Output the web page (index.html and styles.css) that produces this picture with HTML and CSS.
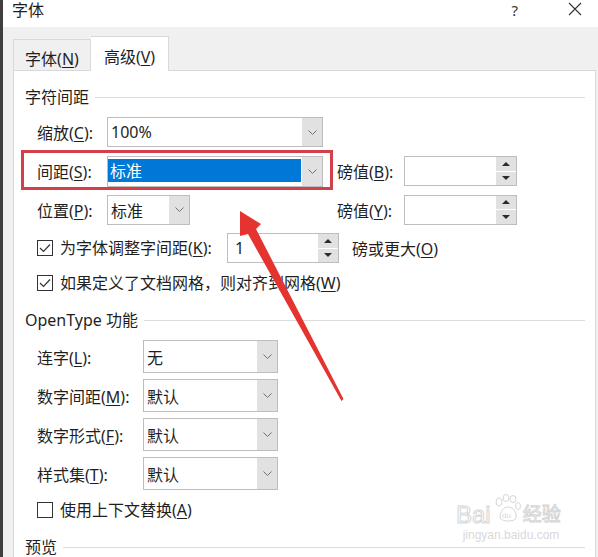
FILE: index.html
```html
<!DOCTYPE html>
<html>
<head>
  <meta charset="utf-8">
  <title>字体</title>
  <link rel="stylesheet" href="styles.css">
</head>
<body>
<div class="screen">
  <div class="edge"></div>
  <div class="dialog">
    <div class="titlebar">
      <span class="title">字体</span>
      <span class="help">?</span>
      <svg class="close" width="14" height="14" viewBox="0 0 14 14"><path d="M1 1L13 13M13 1L1 13" stroke="#333" stroke-width="1.1" fill="none"/></svg>
    </div>

    <div class="tabs">
      <div class="tab">字体(<u>N</u>)</div>
      <div class="tab active">高级(<u>V</u>)</div>
    </div>

    <div class="panel">
      <div class="group-title"><span>字符间距</span></div>
      <div class="group">
        <div class="row grid1 r-scale">
          <span class="lbl">缩放(<u>C</u>):</span>
          <div class="combo"><span class="val">100%</span><span class="drop"></span></div>
        </div>
        <div class="row grid1 r-spacing">
          <span class="lbl">间距(<u>S</u>):</span>
          <div class="combo"><span class="val selected">标准</span><span class="drop"></span></div>
          <span></span>
          <span class="lbl">磅值(<u>B</u>):</span>
          <div class="spin"><span class="val"></span><span class="arrows"><i class="up"></i><i class="down"></i></span></div>
        </div>
        <div class="row grid1 r-pos">
          <span class="lbl">位置(<u>P</u>):</span>
          <div class="combo short"><span class="val">标准</span><span class="drop"></span></div>
          <span></span>
          <span class="lbl">磅值(<u>Y</u>):</span>
          <div class="spin"><span class="val"></span><span class="arrows"><i class="up"></i><i class="down"></i></span></div>
        </div>
        <div class="row grid-kern r-kern">
          <label class="check"><span class="box on"></span><span>为字体调整字间距(<u>K</u>):</span></label>
          <div class="spin"><span class="val">1</span><span class="arrows"><i class="up"></i><i class="down"></i></span></div>
          <span></span>
          <span class="lbl">磅或更大(<u>O</u>)</span>
        </div>
        <div class="row r-grid">
          <label class="check"><span class="box on"></span><span>如果定义了文档网格，则对齐到网格(<u>W</u>)</span></label>
        </div>
      </div>

      <div class="group-title gap"><span>OpenType 功能</span></div>
      <div class="group">
        <div class="row grid2 r-ot first">
          <span class="lbl">连字(<u>L</u>):</span>
          <div class="combo tall"><span class="val">无</span><span class="drop"></span></div>
        </div>
        <div class="row grid2 r-ot">
          <span class="lbl">数字间距(<u>M</u>):</span>
          <div class="combo tall"><span class="val">默认</span><span class="drop"></span></div>
        </div>
        <div class="row grid2 r-ot">
          <span class="lbl">数字形式(<u>F</u>):</span>
          <div class="combo tall"><span class="val">默认</span><span class="drop"></span></div>
        </div>
        <div class="row grid2 r-ot">
          <span class="lbl">样式集(<u>T</u>):</span>
          <div class="combo tall"><span class="val">默认</span><span class="drop"></span></div>
        </div>
        <div class="row r-ctx">
          <label class="check"><span class="box"></span><span>使用上下文替换(<u>A</u>)</span></label>
        </div>
      </div>

      <div class="group-title gap"><span>预览</span></div>
    </div>
  </div>

  <!-- annotation overlays -->
  <div class="mark"></div>
  <svg class="arrow" width="598" height="557" viewBox="0 0 598 557">
    <polygon points="240,211 261,224 256,229 343.5,399 341.5,401 248,234 240,236" fill="#e5332f"/>
  </svg>
  <div class="watermark">
    <div class="wm-top">
      <span class="wm-bai">Bai</span>
      <svg class="wm-paw" width="30" height="30" viewBox="0 0 30 30">
        <g fill="none" stroke="#d6d6d6" stroke-width="1">
          <ellipse cx="7" cy="8" rx="3" ry="4"/>
          <ellipse cx="14" cy="4" rx="3" ry="3.5"/>
          <ellipse cx="21" cy="5" rx="3" ry="3.5"/>
          <ellipse cx="26" cy="12" rx="2.5" ry="3.5"/>
          <path d="M8 24C8 17 12 13 16 13C21 13 25 18 24 24C23 28 10 28 8 24Z"/>
        </g>
        <text x="10" y="24" font-size="8" fill="#d6d6d6" font-family="Liberation Sans, sans-serif">du</text>
      </svg>
      <span class="wm-jy">经验</span>
    </div>
    <div class="wm-url">jingyan.baidu.com</div>
  </div>
</div>
</body>
</html>
```

FILE: styles.css
```css
body {
  margin: 0;
  background: #ffffff;
  font-family: "Noto Sans", "Noto Sans CJK SC", sans-serif;
  font-size: 16px;
  color: #1f1f1f;
}
u {
  text-decoration-thickness: 1px;
  text-underline-offset: 2px;
}
.screen {
  position: relative;
  width: 598px;
  height: 557px;
  overflow: hidden;
  display: flex;
}
.edge {
  width: 3px;
  background: #3f3f3f;
}
.dialog {
  flex: 1;
  background: #f0f0f0;
  display: flex;
  flex-direction: column;
}
.titlebar {
  height: 27px;
  background: #ffffff;
  display: flex;
  align-items: flex-start;
  line-height: 20px;
  padding-left: 9px;
}
.title {
  flex: 1;
}
.help {
  font-size: 15px;
  color: #333;
  margin-right: 50px;
}
.close {
  margin-top: 2px;
  margin-right: 16px;
}
.tabs {
  height: 43px;
  display: flex;
  align-items: flex-end;
  padding-left: 10px;
}
.tab {
  box-sizing: border-box;
  width: 78px;
  height: 31px;
  padding-top: 9px;
  line-height: 20px;
  text-align: center;
  background: #f0f0f0;
  border: 1px solid #d9d9d9;
  border-bottom: none;
}
.tab.active {
  height: 35px;
  padding-top: 10px;
  background: #ffffff;
  border-left: none;
  margin-bottom: -1px;
  position: relative;
  z-index: 1;
}
.panel {
  flex: 1;
  margin-left: 10px;
  width: 583px;
  box-sizing: border-box;
  background: #ffffff;
  border: 1px solid #d9d9d9;
  border-bottom: none;
  padding: 16px 10px 0 11px;
}
.group-title {
  display: flex;
  align-items: center;
  height: 20px;
  line-height: 20px;
}
.group-title::after {
  content: "";
  flex: 1;
  height: 1px;
  background: #dcdcdc;
  margin-left: 6px;
}
.group-title.gap {
  margin-top: 17px;
}
.group {
  padding-left: 12px;
}
.row {
  display: grid;
  align-items: center;
}
.grid1 {
  grid-template-columns: 70px 216px 14px 67px 113px;
}
.grid-kern {
  grid-template-columns: 190px 112px 13px auto;
}
.grid2 {
  grid-template-columns: 106px 135px;
}
.r-scale { margin-top: 10px; height: 30px; }
.r-spacing { margin-top: 8px; height: 32px; }
.r-pos { margin-top: 7px; height: 31px; }
.r-kern { margin-top: 8px; height: 30px; }
.r-grid { margin-top: 10px; height: 20px; }
.r-ot { margin-top: 6px; height: 33px; }
.r-ot.first { margin-top: 10px; }
.r-ctx { margin-top: 10px; height: 20px; }

.combo, .spin {
  box-sizing: border-box;
  height: 30px;
  border: 1px solid #bdbdbd;
  background: #ffffff;
  display: flex;
}
.combo.short {
  width: 83px;
}
.combo.tall {
  height: 33px;
}
.r-spacing .combo {
  height: 31px;
}
.val {
  flex: 1;
  padding-left: 3px;
  display: flex;
  align-items: center;
}
.val.selected {
  margin: 2px 1px 4px 0;
  padding-left: 2px;
  background: #0078d7;
  color: #ffffff;
}
.drop {
  width: 20px;
  background: #e1e1e1 url("data:image/svg+xml;utf8,<svg xmlns='http://www.w3.org/2000/svg' width='9' height='5'><path d='M0.5 0.5L4.5 4.5L8.5 0.5' stroke='%23707070' fill='none'/></svg>") no-repeat center;
}
.arrows {
  width: 20px;
  display: flex;
  flex-direction: column;
  gap: 1px;
  background: #ffffff;
}
.arrows i {
  flex: 1;
  background: #e1e1e1;
  display: flex;
  align-items: center;
  justify-content: center;
}
.arrows i::before {
  content: "";
  border-left: 4px solid transparent;
  border-right: 4px solid transparent;
}
.arrows .up::before {
  border-bottom: 4px solid #2a2a2a;
}
.arrows .down::before {
  border-top: 4px solid #2a2a2a;
}
.spin .val {
  padding-left: 7px;
}
.check {
  display: flex;
  align-items: center;
  gap: 7px;
  line-height: 20px;
}
.box {
  box-sizing: border-box;
  width: 16px;
  height: 16px;
  border: 1px solid #333333;
  background: #ffffff center no-repeat;
}
.box.on {
  background-image: url("data:image/svg+xml;utf8,<svg xmlns='http://www.w3.org/2000/svg' width='12' height='10'><path d='M1 5L4.5 8.5L11 1.5' stroke='%23333' stroke-width='1.2' fill='none'/></svg>");
}

/* overlays */
.mark {
  position: absolute;
  left: 21px;
  top: 150px;
  width: 312px;
  height: 40px;
  box-sizing: border-box;
  border: 3px solid #d2404a;
}
.arrow {
  position: absolute;
  left: 0;
  top: 0;
  pointer-events: none;
}
.watermark {
  position: absolute;
  left: 456px;
  top: 488px;
  width: 110px;
  text-align: center;
}
.wm-top {
  display: flex;
  align-items: flex-end;
  height: 40px;
}
.wm-bai, .wm-jy {
  font-family: "Liberation Sans", "Noto Sans CJK SC", sans-serif;
  font-size: 24px;
  line-height: 26px;
  color: #ffffff;
  -webkit-text-stroke: 1px #d6d6d6;
}
.wm-jy {
  font-size: 19px;
}
.wm-paw {
  margin: 0 1px 4px;
}
.wm-url {
  font-family: "Liberation Sans", sans-serif;
  font-size: 12px;
  color: #d9d9d9;
}
```
